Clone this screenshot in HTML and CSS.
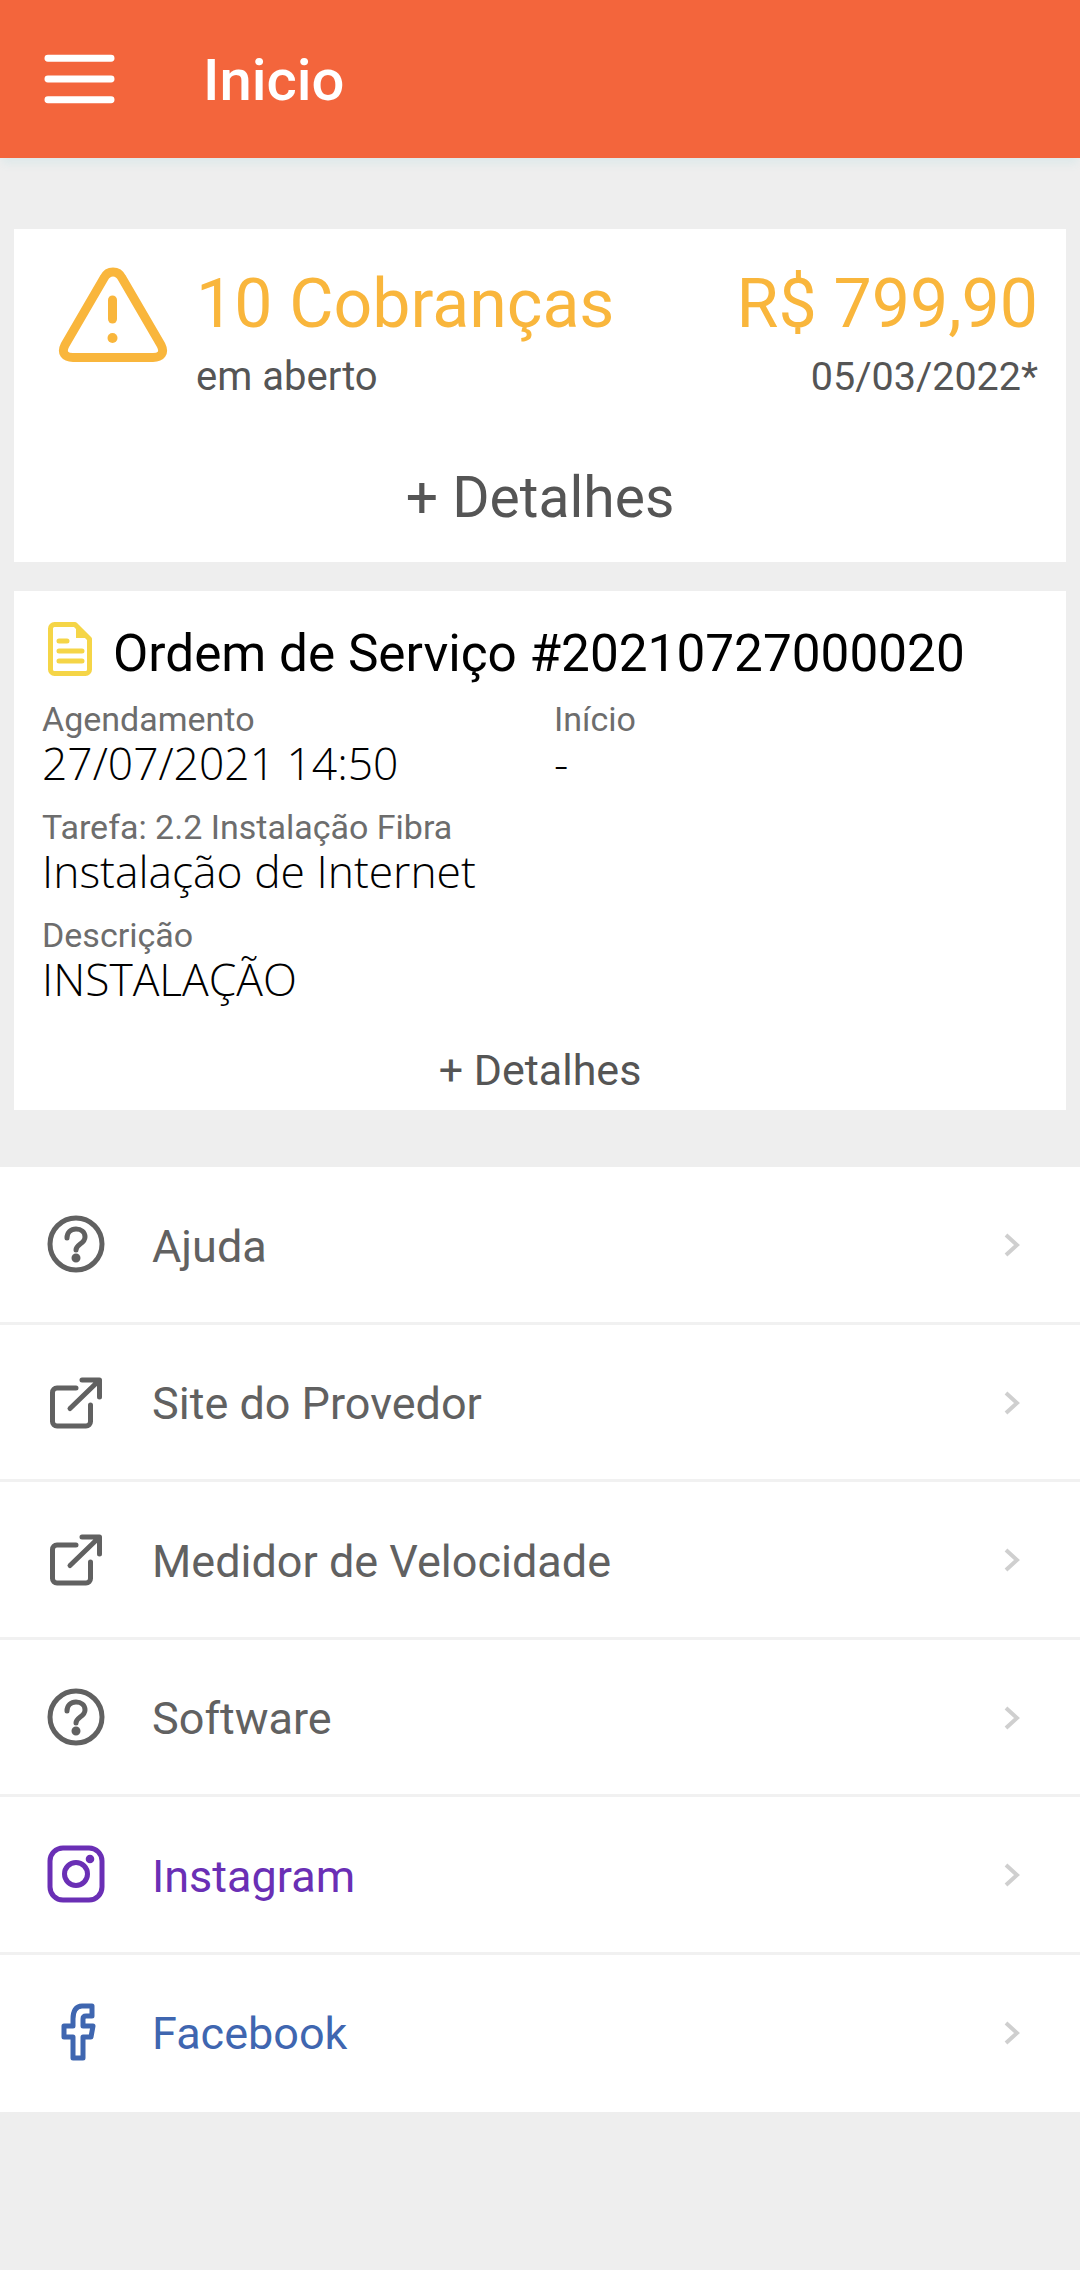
FILE: index.html
```html
<!DOCTYPE html>
<html lang="en">
<head>
  <meta charset="UTF-8" />
  <title>Inicio</title>
  <link rel="stylesheet" href="styles.css">
</head>
<body>

<header class="topbar">
  <svg class="menu-icon" viewBox="0 0 72 52"><path d="M4 5h64M4 26h64M4 47h64"/></svg>
  <div class="topbar-title">Inicio</div>
</header>

<main class="content">
  <section class="card bills">
    <div class="bills-row">
      <svg class="warn-icon" viewBox="0 0 110 96">
        <path d="M55 5C51 5 48 7 46 11L7 78C3 86 7 90.500 15 90.500H95C103 90.500 107 86 103 78L64 11C62 7 59 5 55 5Z"/>
        <path class="warn-mark" d="M54.500 33V52"/>
        <circle cx="54.500" cy="71" r="5"/>
      </svg>
      <div class="bills-left">
        <div class="bills-big">10 Cobranças</div>
        <div class="bills-sub">em aberto</div>
      </div>
      <div class="bills-right">
        <div class="bills-big">R$ 799,90</div>
        <div class="bills-sub">05/03/2022*</div>
      </div>
    </div>
    <div class="more more-big">+ Detalhes</div>
  </section>

  <section class="card order">
    <div class="order-title">
      <svg class="doc-icon" viewBox="0 0 44 54">
        <path d="M6.500 2.500H27L41.500 17V47.500A4 4 0 0 1 37.500 51.500H6.500A4 4 0 0 1 2.500 47.500V6.500A4 4 0 0 1 6.500 2.500Z"/>
        <path class="doc-fold" d="M28 3V16H41Z"/>
        <path d="M11 19h8M11 29h23M11 39h23"/>
      </svg>
      <span>Ordem de Serviço #20210727000020</span>
    </div>
    <div class="order-cols">
      <div class="field">
        <div class="field-label">Agendamento</div>
        <div class="field-value">27/07/2021 14:50</div>
      </div>
      <div class="field">
        <div class="field-label">Início</div>
        <div class="field-value">-</div>
      </div>
    </div>
    <div class="field">
      <div class="field-label">Tarefa: 2.2 Instalação Fibra</div>
      <div class="field-value">Instalação de Internet</div>
    </div>
    <div class="field">
      <div class="field-label">Descrição</div>
      <div class="field-value">INSTALAÇÃO</div>
    </div>
    <div class="more more-small">+ Detalhes</div>
  </section>
</main>

<nav class="list">
  <a class="row">
    <svg class="row-icon" viewBox="0 0 58 58"><circle cx="29" cy="29" r="26"/><path d="M20 23c0-6 4-9 9-9s9 3 9 8c0 7-9 7-9 13"/><circle class="dot" cx="29" cy="43" r="2"/></svg>
    <span class="row-text">Ajuda</span>
    <svg class="chevron" viewBox="0 0 16 24"><path d="M2 2l11 10L2 22"/></svg>
  </a>
  <a class="row">
    <svg class="row-icon" viewBox="0 0 58 58"><path d="M29 15H10a4.500 4.500 0 0 0-4.500 4.500V48.500a4.500 4.500 0 0 0 4.500 4.500H39a4.500 4.500 0 0 0 4.500-4.500V32"/><path d="M23 35.500L52 7.500M35 7h17.500v17"/></svg>
    <span class="row-text">Site do Provedor</span>
    <svg class="chevron" viewBox="0 0 16 24"><path d="M2 2l11 10L2 22"/></svg>
  </a>
  <a class="row">
    <svg class="row-icon" viewBox="0 0 58 58"><path d="M29 15H10a4.500 4.500 0 0 0-4.500 4.500V48.500a4.500 4.500 0 0 0 4.500 4.500H39a4.500 4.500 0 0 0 4.500-4.500V32"/><path d="M23 35.500L52 7.500M35 7h17.500v17"/></svg>
    <span class="row-text">Medidor de Velocidade</span>
    <svg class="chevron" viewBox="0 0 16 24"><path d="M2 2l11 10L2 22"/></svg>
  </a>
  <a class="row">
    <svg class="row-icon" viewBox="0 0 58 58"><circle cx="29" cy="29" r="26"/><path d="M20 23c0-6 4-9 9-9s9 3 9 8c0 7-9 7-9 13"/><circle class="dot" cx="29" cy="43" r="2"/></svg>
    <span class="row-text">Software</span>
    <svg class="chevron" viewBox="0 0 16 24"><path d="M2 2l11 10L2 22"/></svg>
  </a>
  <a class="row row-instagram">
    <svg class="row-icon" viewBox="0 0 58 58"><rect x="3" y="3" width="52" height="52" rx="13"/><circle cx="29" cy="29" r="11.500"/><circle class="dot" cx="43" cy="14" r="1.800"/></svg>
    <span class="row-text">Instagram</span>
    <svg class="chevron" viewBox="0 0 16 24"><path d="M2 2l11 10L2 22"/></svg>
  </a>
  <a class="row row-facebook">
    <svg class="row-icon" viewBox="0 0 58 58"><path d="M35 3h10v10h-6c-2 0-3 1-3 3v7h10l-2 11h-8v21H26V34H17V23h9v-7c0-8 3-13 9-13Z"/></svg>
    <span class="row-text">Facebook</span>
    <svg class="chevron" viewBox="0 0 16 24"><path d="M2 2l11 10L2 22"/></svg>
  </a>
</nav>

</body>
</html>
```

FILE: styles.css
```css
html, body {
  margin: 0;
  padding: 0;
}
body {
  width: 1080px;
  height: 2270px;
  overflow: hidden;
  background-color: #eeeeee;
  font-family: 'Roboto', sans-serif;
  color: #555555;
}
svg {
  display: block;
  flex: none;
  fill: none;
}
.topbar {
  height: 158px;
  background-color: #f3653c;
  display: flex;
  align-items: center;
  padding-left: 44px;
  box-shadow: 0 8px 8px -2px #dfe9ea;
  color: #fff;
}
.menu-icon {
  width: 71px;
  height: 52px;
  stroke: #fff;
  stroke-width: 7;
  stroke-linecap: round;
}
.topbar-title {
  margin-left: 88px;
  padding-top: 2px;
  font-size: 58px;
  font-weight: 500;
}
.content {
  padding: 71px 14px 0;
}
.card {
  background-color: #fff;
}
.bills {
  height: 333px;
  margin-bottom: 29px;
  box-sizing: border-box;
  padding-top: 35px;
}
.bills-row {
  display: flex;
  padding: 0 28px 0 44px;
  height: 142px;
}
.warn-icon {
  width: 110px;
  height: 96px;
  margin-top: 3px;
  stroke: #f9b63c;
  stroke-width: 9;
  stroke-linejoin: round;
}
.warn-mark {
  stroke-linecap: round;
}
.warn-icon circle {
  fill: #f9b63c;
  stroke: none;
}
.bills-left {
  margin-left: 28px;
  flex: 1;
}
.bills-right {
  text-align: right;
}
.bills-big {
  font-size: 68px;
  line-height: 80px;
  color: #f9b63c;
}
.bills-sub {
  font-size: 39.500px;
  line-height: 54px;
  margin-top: 6px;
}
.bills-left .bills-sub {
  font-size: 40px;
}
.more {
  text-align: center;
}
.more-big {
  font-size: 57px;
  line-height: 64px;
  margin-top: 60px;
}
.order {
  height: 519px;
  box-sizing: border-box;
  padding: 32px 14px 0 28px;
}
.order-title {
  display: flex;
  align-items: center;
  margin-bottom: 15px;
  font-size: 51.300px;
  line-height: 62px;
  color: #000;
}
.doc-icon {
  width: 44px;
  height: 54px;
  margin: -11px 21px 0 6px;
  stroke: #f5d547;
  stroke-width: 5;
  stroke-linecap: round;
  stroke-linejoin: round;
}
.doc-fold {
  fill: #f5d547;
  stroke: none;
}
.order-cols {
  display: grid;
  grid-template-columns: 512px 1fr;
}
.field {
  margin-bottom: 20px;
}
.field-label {
  font-size: 34px;
  line-height: 38px;
  color: #6d6d6d;
}
.field-value {
  font-family: 'Open Sans', sans-serif;
  font-weight: 300;
  font-size: 44.400px;
  line-height: 50px;
  color: #000;
}
.more-small {
  font-size: 43px;
  line-height: 50px;
  margin: 41px 0 0 -14px;
}
.list {
  margin-top: 57px;
  background-color: #fff;
}
.row {
  display: flex;
  align-items: center;
  height: 157.500px;
  box-sizing: border-box;
  padding: 0 60px 0 47px;
  border-bottom: 3px solid #f1f1f1;
  color: #616161;
}
.row:last-child {
  border-bottom-color: #fff;
}
.row-icon {
  width: 58px;
  height: 58px;
  stroke: currentColor;
  stroke-width: 5;
  stroke-linecap: round;
  stroke-linejoin: round;
}
.row-icon .dot {
  fill: currentColor;
}
.row-text {
  margin-left: 47px;
  padding-top: 4px;
  flex: 1;
  font-size: 45px;
}
.row-instagram {
  color: #6a2fb5;
}
.row-facebook {
  color: #3f66b0;
}
.chevron {
  width: 16px;
  height: 24px;
  margin-top: 2px;
  stroke: #cfcfcf;
  stroke-width: 4;
}
```
